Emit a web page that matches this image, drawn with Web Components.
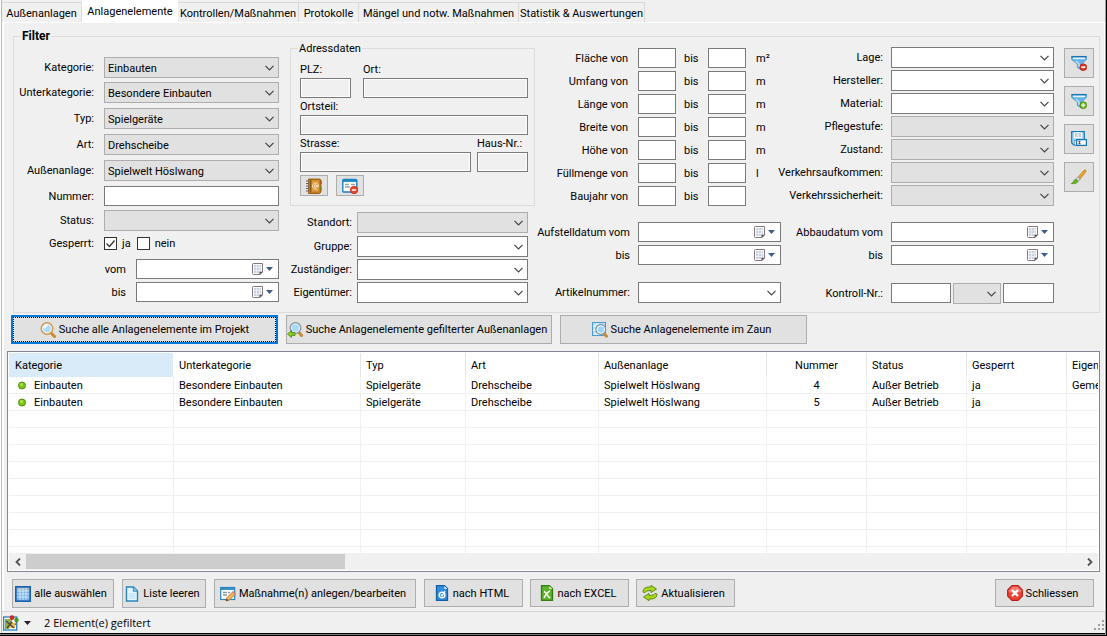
<!DOCTYPE html>
<html lang="de">
<head>
<meta charset="utf-8">
<title>Anlagenelemente</title>
<style>
  body { margin: 0; background: #f0f0f0; color: #000; font: 11px/15px Roboto, "Liberation Sans", sans-serif; }
</style>
</head>
<body>
<asset-window></asset-window>
<script>
const ICONS = {
  search: `<path d="M11 11l3.500 3.500" stroke="#c98b35" stroke-width="3" stroke-linecap="round"/><circle cx="7" cy="6.500" r="5.700" fill="#bfe3fa" stroke="#d39a45" stroke-width="1.600"/><circle cx="7" cy="6.500" r="4.300" fill="#a9d8f8" stroke="#fff"/><path d="M4.500 6.500a3 3 0 0 1 3-3" stroke="#fff" stroke-width="1.500" fill="none"/>`,
  searchBack: `<path d="M12.500 11l2 2.500" stroke="#c98b35" stroke-width="3" stroke-linecap="round"/><circle cx="8.500" cy="6" r="5.300" fill="#a9d8f8" stroke="#8b9299" stroke-width="1.400"/><circle cx="8.500" cy="6" r="4.200" fill="none" stroke="#e8f6ff"/><path d="M.5 12l4-3.500v2.200h3.500v2.700h-3.500v2.200z" fill="#8fd01e" stroke="#3d8511" stroke-width=".8"/>`,
  searchArea: `<rect x=".5" y=".5" width="13" height="13" fill="#b6dcf8" stroke="#4d9ad1"/><path d="M1 4h3M1 8h3M5 1v2M2 12h5" stroke="#fff"/><path d="M12.500 12l2 2.200" stroke="#c98b35" stroke-width="3" stroke-linecap="round"/><circle cx="8.800" cy="7.500" r="4.800" fill="#9bd2f8" stroke="#7f8991" stroke-width="1.200"/><circle cx="8.800" cy="7.500" r="3.800" fill="none" stroke="#fff"/>`,
  book: `<path d="M2.500 1h11l1.500 1v12l-1.500 1.500h-11z" fill="#c47a1c" stroke="#86500e" stroke-width=".8"/><path d="M4.500 1.500v13" stroke="#8d540f"/><rect x="6" y="2.500" width="7" height="11" fill="#d99a3c"/><path d="M0 3h3M0 5.500h3M0 8h3M0 10.500h3M0 13h3" stroke="#666"/><circle cx="9.500" cy="8" r="1.200" fill="none" stroke="#fff2d0"/><path d="M11 7v1.500q1.500 1 1.500-.7a3 3 0 1 0-1.500 2.900" fill="none" stroke="#fff2d0" stroke-width=".8"/><path d="M15 3v3" stroke="#c33"/><path d="M15 9v3" stroke="#3a9a2a"/>`,
  formDel: `<rect x=".8" y="1.500" width="14" height="12.500" rx="1" fill="#fff" stroke="#1681c4" stroke-width="1.400"/><path d="M1 3h14" stroke="#1681c4" stroke-width="1.800"/><path d="M3 6.500h4M3 9h5M9 6.500h4" stroke="#9aa5ae" stroke-width="1.500"/><circle cx="12" cy="12" r="3.700" fill="#e8472b" stroke="#b82812" stroke-width=".7"/><path d="M9.800 12h4.400" stroke="#fff" stroke-width="1.500"/>`,
  funnelDel: `<path d="M.6 1.500h14.800v3l-5 4.500v6l-4-2.500v-3.500l-5.800-4.500z" fill="#62b3ea" stroke="#3f93cc" stroke-width=".8"/><path d="M.5 1.700h15" stroke="#1d72ae" stroke-width="1.500"/><path d="M2 3.400h12" stroke="#e3f4fe" stroke-width="1.600"/><path d="M5 6l3 3v3" stroke="#c2e4fa" stroke-width="1.500"/><circle cx="12.300" cy="12.200" r="3.400" fill="#e23b24" stroke="#a81c0c" stroke-width=".7"/><path d="M10.300 12.200h4" stroke="#fff" stroke-width="1.600"/>`,
  funnelAdd: `<path d="M.6 1.500h14.800v3l-5 4.500v6l-4-2.500v-3.500l-5.800-4.500z" fill="#62b3ea" stroke="#3f93cc" stroke-width=".8"/><path d="M.5 1.700h15" stroke="#1d72ae" stroke-width="1.500"/><path d="M2 3.400h12" stroke="#e3f4fe" stroke-width="1.600"/><path d="M5 6l3 3v3" stroke="#c2e4fa" stroke-width="1.500"/><circle cx="12.300" cy="12.200" r="3.400" fill="#6eb413" stroke="#3f7f08" stroke-width=".7"/><path d="M10.300 12.200h4M12.300 10.200v4" stroke="#fff" stroke-width="1.500"/>`,
  save: `<path d="M.7.7h12.600v13.300h-10.600l-2-2z" fill="#a9d9f5" stroke="#1878b8" stroke-width="1.200"/><rect x="3" y="1.300" width="8" height="5.700" fill="#fff"/><path d="M4 3h2.500M7.500 3h2.500M4 5h2.500M7.500 5h2.500" stroke="#8b9298"/><rect x="3.200" y="9.500" width="3" height="4.500" fill="#fff" stroke="#1878b8" stroke-width=".6"/><rect x="5.600" y="8.600" width="9.800" height="5.800" fill="#fff" stroke="#1878b8" stroke-width="1.300"/><path d="M7.200 10.200h2.600M7.200 12.800h2.600M8.500 10.200v2.600" stroke="#333" stroke-width=".8"/>`,
  brush: `<path d="M15 1.200q-1-1-3 1l-5 6 2 1.800 5-6q1.500-2 1-2.800z" fill="#efa02b" stroke="#b87415" stroke-width=".6"/><path d="M7.200 7.800l2.200 2-2.200 2.500-2.300-2z" fill="#d9dde0" stroke="#777" stroke-width=".7"/><path d="M4.800 10.300l2.200 2q-1 3-6.800 2.200 2.200-1 2.300-2.200t2.300-2z" fill="#67b516" stroke="#4b8612" stroke-width=".6"/>`,
  calendar: `<path d="M4.500 2.500h9v8.500l-2.500 2.500h-6.500q-1 0-1-1v-9q0-1 1-1z" fill="#fff" stroke="#85777b"/><rect x="5" y="4" width="7" height="8" fill="#c9d1de"/><path d="M5 6.500h7M5 9.500h7M7.500 4v8M10.500 4v8" stroke="#eef2f8" stroke-width=".8"/><path d="M10.500 14v-3.200h3.300z" fill="#5a4a50"/>`,
  grid: `<rect x=".8" y=".8" width="14.400" height="14.400" fill="#74ade2" stroke="#1a5fae" stroke-width="1.600"/><rect x="2" y="2" width="12" height="2.500" fill="#a3b9bd"/><path d="M2 5h12M2 8h12M2 11h12M5 2v12M8 2v12M11 2v12" stroke="#d9ecfb" stroke-width=".9"/>`,
  page: `<path d="M2.500 1h7l4 4v10h-11z" fill="#e5f4fd" stroke="#2a86b8" stroke-width="1.400"/><path d="M9.300 1v4.200h4" fill="#9bd0ee" stroke="#2a86b8"/><path d="M4.500 8h7M4.500 10h7M4.500 12h7" stroke="#b2dcf4"/>`,
  formEdit: `<rect x=".7" y="1.500" width="14" height="12" fill="#fff" stroke="#2585bd" stroke-width="1.200"/><path d="M1 3h13.500" stroke="#2585bd" stroke-width="1.800"/><path d="M3 6.500h4M3 9h4M8 6.500h2" stroke="#8b969d" stroke-width="1.300"/><path d="M6 15l1-3.500 6-6 2.500 2.500-6 6z" fill="#f3b45c" stroke="#ae6a20" stroke-width=".8"/><path d="M12 6.500l2.500 2.500 1-1-2.500-2.500z" fill="#e97b8c"/><path d="M6 15l.7-2.300 1.600 1.600z" fill="#333"/>`,
  html: `<path d="M2.500.7h8l3 3v11.600h-11z" fill="#2f8ddb" stroke="#1260a8" stroke-width="1.300"/><path d="M10.300 1v3h3z" fill="#d5ecfd"/><circle cx="8" cy="10" r="2.900" fill="none" stroke="#fff" stroke-width="1.400"/><path d="M8 11l3-5M7 9.500l1.500 2" stroke="#fff" stroke-width="1.300"/>`,
  excel: `<path d="M2.500.7h8l3 3v11.600h-11z" fill="#5fb02d" stroke="#347c12" stroke-width="1.300"/><path d="M10.300 1v3h3z" fill="#dff2d0"/><path d="M5 6.500q2 1 3 3t3 3.500M11 6q-3 1-6 7" stroke="#fff" stroke-width="1.600" fill="none"/>`,
  refresh: `<path d="M1 7q0-5 6-5h2v-1.700l5.500 3.700-5.500 3.600v-2h-2q-3 0-4 2z" fill="#a9d51e" stroke="#55860c" stroke-width=".9"/><path d="M15 9q0 5-6 5h-2v1.700l-5.500-3.700 5.500-3.600v2h2q3 0 4-2z" fill="#a9d51e" stroke="#55860c" stroke-width=".9"/>`,
  close: `<path d="M5 .7h6l4.300 4.300v6l-4.300 4.300h-6l-4.300-4.300v-6z" fill="#ea4434" stroke="#b71f18" stroke-width="1.200"/><path d="M5.300 1.800h5.400l3.500 3.500v2q-6 1-12.400 0v-2z" fill="#f2796b"/><path d="M5 5l6 6M11 5l-6 6" stroke="#fff" stroke-width="2.400"/>`,
  map: `<rect x=".7" y="2" width="13" height="13" fill="#fff" stroke="#2682bd" stroke-width="1.300"/><path d="M2 4h5l1 5-2 5h-4z" fill="#8ab72c"/><path d="M8 7l4 1v5h-5z" fill="#e4b84b"/><path d="M3 6l8 7M4 13l5-6" stroke="#544" stroke-width="1.400"/><path d="M8.500 4l-1 4M13.500 6l-1 4" stroke="#555"/><circle cx="9" cy="2.700" r="2.400" fill="#d9281b"/><circle cx="13.500" cy="5" r="2.200" fill="#3c9f27"/>`,
  dot: `<circle cx="8" cy="7.500" r="3.500" fill="#7cc613" stroke="#4d8d0d"/><circle cx="7.500" cy="6.500" r="1.500" fill="#a9e34a"/>`
};

class UiIcon extends HTMLElement {
  connectedCallback() {
    this.attachShadow({ mode: "open" }).innerHTML =
      `<style>:host{display:block;width:16px;height:16px;flex:none}svg{display:block}</style>
       <svg width="16" height="16" viewBox="0 0 16 16" fill="none" aria-hidden="true">${ICONS[this.getAttribute("name")]}</svg>`;
  }
}

class UiButton extends HTMLElement {
  connectedCallback() {
    const icon = this.getAttribute("icon");
    const name = this.getAttribute("name") || "";
    this.attachShadow({ mode: "open" }).innerHTML = `<style>
      :host{display:block;height:28px}
      button{box-sizing:border-box;width:100%;height:100%;display:flex;align-items:center;justify-content:center;gap:3px;
        margin:0;padding:0 4px 0 0;border:1px solid #adadad;background:#e1e1e1;color:inherit;font:inherit;white-space:nowrap}
      :host([compact]) button{padding:0}
      :host([current]) button{padding:0;border:2px solid #0078d7;outline:1px dotted #000;outline-offset:-3px}
      </style>
      <button type="button"${name ? ` aria-label="${name}"` : ""}><ui-icon name="${icon}"></ui-icon><slot></slot></button>`;
  }
}

/* Labelled control: kind is "text", "select" or "date". */
class UiField extends HTMLElement {
  connectedCallback() {
    const label = this.getAttribute("label") || "";
    const value = this.getAttribute("value") || "";
    const kind = this.getAttribute("kind") || "text";
    const aria = label ? "" : ` aria-label="${this.getAttribute("name")}"`;
    let control;
    if (kind === "select") {
      control = `<select id="c"${aria}><option>${value}</option></select>
        <svg class="mark" width="9" height="6" viewBox="0 0 9 6" fill="none" aria-hidden="true"><path d="M.5.8l4 4 4-4" stroke="#444" stroke-width="1.200"/></svg>`;
    } else {
      control = `<input id="c" type="text" value="${value}"${this.hasAttribute("locked") ? " readonly" : ""}${aria}>`;
      if (kind === "date") control += `<button class="mark" type="button" aria-label="Kalender"><ui-icon name="calendar"></ui-icon><svg width="7" height="4" viewBox="0 0 7 4" aria-hidden="true"><path d="M0 0h7L3.500 4z" fill="#3e5c8a"/></svg></button>`;
    }
    this.attachShadow({ mode: "open" }).innerHTML = `<style>
      :host{display:grid;grid-template-columns:var(--label,0px) minmax(0,1fr);column-gap:var(--gap,8px);align-items:center;align-self:start}
      :host([bare]){display:block}
      :host([stacked]){display:block}
      label{text-align:right;white-space:nowrap;justify-self:end}
      :host([stacked]) label{display:block;text-align:left;justify-self:start;line-height:17px}
      .box{display:grid;align-items:center}
      input,select{grid-area:1/1;box-sizing:border-box;width:100%;min-width:0;height:20px;margin:0;padding:0 3px;border:1px solid #7a7a7a;
        border-radius:0;background:#fff;color:inherit;font:inherit;appearance:none;outline:0}
      select{height:21px;padding-top:1px}
      :host([gray]) select{background:#e1e1e1;border-color:#adadad}
      input[readonly]{background:#f0f0f0;box-shadow:inset 0 0 0 1px #fff}
      .mark{grid-area:1/1;justify-self:end;margin:0 5px 0 0;pointer-events:none}
      button.mark{display:flex;align-items:center;gap:1px;margin-right:6px;padding:0;border:0;background:none}
      </style>
      ${label ? `<label for="c">${label}</label>` : ""}<div class="box">${control}</div>`;
  }
}

class UiCheck extends HTMLElement {
  connectedCallback() {
    this.attachShadow({ mode: "open" }).innerHTML = `<style>
      :host{display:block}
      label{display:flex;align-items:center;gap:5px}
      .box{display:grid}
      input{grid-area:1/1;appearance:none;box-sizing:border-box;width:13px;height:13px;margin:0;border:1px solid #333;background:#fff}
      svg{grid-area:1/1;visibility:hidden;pointer-events:none}
      input:checked + svg{visibility:visible}
      </style>
      <label><span class="box"><input type="checkbox"${this.hasAttribute("on") ? " checked" : ""}><svg width="13" height="13" viewBox="0 0 13 13" fill="none" aria-hidden="true"><path d="M2.500 6.500l3 3 5-6" stroke="#333" stroke-width="1.300"/></svg></span><slot></slot></label>`;
  }
}

/* Range row: "<label> von [ ] bis [ ] <unit>" */
class RangeField extends HTMLElement {
  connectedCallback() {
    this.attachShadow({ mode: "open" }).innerHTML = `<style>
      :host{display:grid;grid-template-columns:85px minmax(0,1fr) 16px minmax(0,1fr) 27px;column-gap:8px;align-items:center;align-self:start}
      label{white-space:nowrap}
      .name{text-align:right;padding-right:2px}
      input{box-sizing:border-box;width:100%;height:20px;margin:0;padding:0 3px;border:1px solid #7a7a7a;font:inherit;border-radius:0}
      span{padding-left:2px}
      </style>
      <label class="name" for="a">${this.getAttribute("label")} von</label><input id="a" type="text">
      <label for="b">bis</label><input id="b" type="text"><span>${this.getAttribute("unit") || ""}</span>`;
  }
}

class UiGroup extends HTMLElement {
  connectedCallback() {
    this.attachShadow({ mode: "open" }).innerHTML = `<style>
      :host{display:block}
      fieldset{margin:0;padding:0;border:1px solid #dcdcdc;min-width:0}
      legend{margin-left:7px;padding:0 1px;line-height:var(--legend,11px);height:var(--legend,11px);font-weight:var(--weight,400);font-size:var(--size,11px)}
      </style>
      <fieldset><legend>${this.getAttribute("legend")}</legend><slot></slot></fieldset>`;
  }
}

class TabBar extends HTMLElement {
  connectedCallback() {
    const tabs = [["Außenanlagen", 80], ["Anlagenelemente", 96], ["Kontrollen/Maßnahmen", 121], ["Protokolle", 60], ["Mängel und notw. Maßnahmen", 160], ["Statistik &amp; Auswertungen", 126]];
    this.attachShadow({ mode: "open" }).innerHTML = `<style>
      :host{display:flex;align-items:flex-end;height:22px}
      button{box-sizing:border-box;height:20px;margin:0;padding:1px 0 0;border:1px solid #d9d9d9;border-width:1px 1px 0 0;background:#f0f0f0;color:inherit;font:inherit;white-space:nowrap}
      button[aria-selected=true]{height:22px;padding:0;border:0;background:#fff}
      </style>` + tabs.map(([t, w], i) => `<button type="button" role="tab" aria-selected="${i === 1}" style="width:${w}px">${t}</button>`).join("");
    this.setAttribute("role", "tablist");
  }
}

class FilterPanel extends HTMLElement {
  connectedCallback() {
    const sel = (l, v = "", g = "") => `<ui-field kind="select" label="${l}" value="${v}" ${g}></ui-field>`;
    this.attachShadow({ mode: "open" }).innerHTML = `<style>
      :host{display:block;--size:12px}
      .main{--weight:700;--legend:13px}
      .columns{--weight:400;--legend:11px;--size:11px;display:grid;grid-template-columns:270fr 255fr 238fr 281fr 30px;padding:0 5px 8px 6px}
      .a,.c,.d{display:grid;align-content:start}
      .a{--label:74px;--gap:10px;padding:14px 11px 0 0;grid-template-rows:25px repeat(4,26px) 24px 26px 23px 23px 20px}
      .late{--label:106px}
      .flags{display:grid;grid-template-columns:74px auto auto 1fr;column-gap:6px;align-items:center;align-self:start}
      .flags > span{text-align:right}
      .flags > ui-check:nth-child(2){padding-left:4px}
      .b{padding-right:10px}
      .address{display:grid;grid-template-columns:minmax(0,1fr);padding:7px 6px 9px 9px}
      .pair{display:grid}
      .p1{grid-template-columns:51px 1fr;gap:12px}
      .p2{grid-template-columns:1fr 51px;gap:6px}
      .tools{display:flex;gap:8px;padding-top:3px}
      .tools ui-button{width:28px;height:21px}
      .owner{--label:62px;--gap:5px;display:grid;grid-template-rows:24px 23px 23px 21px;padding:6px 7px 0 0}
      .c{padding:5px 2px 0 0;grid-template-rows:repeat(6,23px) 36px 23px 37px 21px;--label:85px}
      .d{padding:4px 10px 0 0;grid-template-rows:repeat(6,23px) 37px 23px 38px 21px;--label:100px}
      .control{display:grid;grid-template-columns:168fr 48fr 51fr;column-gap:2px}
      .e{display:grid;gap:8px;align-content:start;padding-top:5px}
      .e ui-button{height:30px}
      </style>
      <ui-group class="main" legend="Filter"><div class="columns">
        <div class="a">
          ${sel("Kategorie:", "Einbauten", "gray")}${sel("Unterkategorie:", "Besondere Einbauten", "gray")}${sel("Typ:", "Spielgeräte", "gray")}
          ${sel("Art:", "Drehscheibe", "gray")}${sel("Außenanlage:", "Spielwelt Höslwang", "gray")}
          <ui-field label="Nummer:"></ui-field>${sel("Status:", "", "gray")}
          <div class="flags" role="group" aria-label="Gesperrt"><span>Gesperrt:</span><ui-check on>ja</ui-check><ui-check>nein</ui-check></div>
          <ui-field class="late" kind="date" label="vom"></ui-field><ui-field class="late" kind="date" label="bis"></ui-field>
        </div>
        <div class="b">
          <ui-group legend="Adressdaten"><div class="address">
            <div class="pair p1"><ui-field stacked locked label="PLZ:"></ui-field><ui-field stacked locked label="Ort:"></ui-field></div>
            <ui-field stacked locked label="Ortsteil:"></ui-field>
            <div class="pair p2"><ui-field stacked locked label="Strasse:"></ui-field><ui-field stacked locked label="Haus-Nr.:"></ui-field></div>
            <div class="tools"><ui-button compact icon="book" name="Adressbuch"></ui-button><ui-button compact icon="formDel" name="Adresse leeren"></ui-button></div>
          </div></ui-group>
          <div class="owner">${sel("Standort:", "", "gray")}${sel("Gruppe:")}${sel("Zuständiger:")}${sel("Eigentümer:")}</div>
        </div>
        <div class="c">
          <range-field label="Fläche" unit="m²"></range-field><range-field label="Umfang" unit="m"></range-field><range-field label="Länge" unit="m"></range-field>
          <range-field label="Breite" unit="m"></range-field><range-field label="Höhe" unit="m"></range-field><range-field label="Füllmenge" unit="l"></range-field>
          <range-field label="Baujahr"></range-field>
          <ui-field kind="date" label="Aufstelldatum vom"></ui-field><ui-field kind="date" label="bis"></ui-field>${sel("Artikelnummer:")}
        </div>
        <div class="d">
          ${sel("Lage:")}${sel("Hersteller:")}${sel("Material:")}${sel("Pflegestufe:", "", "gray")}${sel("Zustand:", "", "gray")}
          ${sel("Verkehrsaufkommen:", "", "gray")}${sel("Verkehrssicherheit:", "", "gray")}
          <ui-field kind="date" label="Abbaudatum vom"></ui-field><ui-field kind="date" label="bis"></ui-field>
          <div class="control"><ui-field label="Kontroll-Nr.:"></ui-field><ui-field bare gray kind="select" name="Kontrollart"></ui-field><ui-field bare name="Kontroll-Nr. bis"></ui-field></div>
        </div>
        <div class="e"><ui-button compact icon="funnelDel" name="Filter entfernen"></ui-button><ui-button compact icon="funnelAdd" name="Filter hinzufügen"></ui-button>
          <ui-button compact icon="save" name="Filter speichern"></ui-button><ui-button compact icon="brush" name="Felder leeren"></ui-button></div>
      </div></ui-group>`;
  }
}

class ResultTable extends HTMLElement {
  connectedCallback() {
    const cols = [["Kategorie", 165], ["Unterkategorie", 187], ["Typ", 105], ["Art", 133], ["Außenanlage", 168], ["Nummer", 100], ["Status", 100], ["Gesperrt", 100], ["Eigentümer", 100]];
    const rows = [
      ["Einbauten", "Besondere Einbauten", "Spielgeräte", "Drehscheibe", "Spielwelt Höslwang", "4", "Außer Betrieb", "ja", "Gemeinde"],
      ["Einbauten", "Besondere Einbauten", "Spielgeräte", "Drehscheibe", "Spielwelt Höslwang", "5", "Außer Betrieb", "ja", ""]
    ];
    const cell = (t, i) => i ? `<td>${t}</td>` : `<td><div class="first"><ui-icon name="dot"></ui-icon><span>${t}</span></div></td>`;
    const blank = `<tr>${"<td></td>".repeat(cols.length)}</tr>`;
    this.attachShadow({ mode: "open" }).innerHTML = `<style>
      :host{display:flex;flex-direction:column;box-sizing:border-box;border:1px solid #828790;padding:1px;background:#fff;min-height:0}
      .view{flex:1 1 0;min-height:0;overflow:hidden}
      table{border-collapse:separate;border-spacing:0;table-layout:fixed;width:1158px}
      th{box-sizing:border-box;height:24px;padding:0 5px;border-right:1px solid #e5e5e5;font-weight:400;text-align:left}
      th:first-child{background:#d9ebf9;padding-left:6px;border-right-color:#fff}
      td{box-sizing:border-box;height:17px;padding:2px 5px 0;line-height:14px;border:1px solid #f0f0f0;border-width:0 1px 1px 0;white-space:nowrap}
      th:nth-child(6),td:nth-child(6){text-align:center}
      .first{display:flex;align-items:center;gap:4px;height:14px}
      .bar{flex:none;display:grid;grid-template-columns:17px 319fr 736fr 17px;height:17px;background:#f0f0f0}
      .thumb{background:#cdcdcd;margin:1px 0}
      .bar button{grid-row:1;display:grid;place-items:center;margin:0;padding:0;border:0;background:none}
      .bar button:last-child{grid-column:4}
      </style>
      <div class="view"><table><colgroup>${cols.map(c => `<col style="width:${c[1]}px">`).join("")}</colgroup>
      <thead><tr>${cols.map(c => `<th scope="col">${c[0]}</th>`).join("")}</tr></thead>
      <tbody>${rows.map(r => `<tr>${r.map(cell).join("")}</tr>`).join("")}${blank.repeat(9)}</tbody></table></div>
      <div class="bar"><button type="button" aria-label="nach links"><svg width="6" height="8" viewBox="0 0 6 8" fill="none"><path d="M5 .5L1.500 4 5 7.500" stroke="#505050" stroke-width="1.800"/></svg></button>
      <div class="thumb"></div>
      <button type="button" aria-label="nach rechts"><svg width="6" height="8" viewBox="0 0 6 8" fill="none"><path d="M1 .5L4.500 4 1 7.500" stroke="#505050" stroke-width="1.800"/></svg></button></div>`;
  }
}

class StatusLine extends HTMLElement {
  connectedCallback() {
    this.attachShadow({ mode: "open" }).innerHTML = `<style>
      :host{display:flex;align-items:center;height:21px;padding-left:1px;border-top:1px solid #d7d7d7;font:11px/16px "Open Sans","Noto Sans",sans-serif}
      button{display:flex;align-items:center;gap:5px;margin:0;padding:0;border:0;background:none}
      output{flex:1;margin-left:13px}
      .grip{align-self:flex-end;margin-bottom:2px}
      </style>
      <button type="button" aria-label="Karte"><ui-icon name="map"></ui-icon><svg width="7" height="4" viewBox="0 0 7 4"><path d="M0 0h7L3.500 4z" fill="#222"/></svg></button>
      <output>2 Element(e) gefiltert</output>
      <svg class="grip" width="11" height="11" viewBox="0 0 11 11" fill="#a0a0a0" aria-hidden="true"><path d="M8 0h2v2h-2zM4 4h2v2h-2zM8 4h2v2h-2zM0 8h2v2h-2zM4 8h2v2h-2zM8 8h2v2h-2z"/></svg>`;
  }
}

class AssetWindow extends HTMLElement {
  connectedCallback() {
    this.attachShadow({ mode: "open" }).innerHTML = `<style>
      :host{display:flex;flex-direction:column;box-sizing:border-box;min-height:100vh;padding:0 2px 3px 2px;background:#f0f0f0;
        box-shadow:inset -1px 0 #000,inset 0 -1px #000,inset -2px 0 #a0a0a0,inset 0 -2px #777,inset 0 -3px #000,inset 1px 0 #fff,inset 2px 0 #b9b9b9}
      main{flex:1;display:flex;flex-direction:column;border:solid #fff;border-width:1px 1px 0 2px;padding:7px 4px 3px 3px}
      filter-panel{margin:0 0 0 6px}
      .search{display:grid;grid-template-columns:267px 266px 247px;gap:8px;padding:2px 4px 7px}
      .search ui-button,.tall{height:29px}
      result-table{flex:1}
      .actions{display:flex;align-items:flex-start;gap:8px;padding:7px 6px 0 5px}
      .actions ui-button{width:99px}
      .actions .w1{width:102px}.actions .w2{width:84px}.actions .w3{width:202px}
      .exports{display:flex;gap:7px}
      .actions .end{margin-left:auto}
      </style>
      <tab-bar></tab-bar>
      <main>
        <filter-panel></filter-panel>
        <div class="search"><ui-button current icon="search">Suche alle Anlagenelemente im Projekt</ui-button>
          <ui-button icon="searchBack">Suche Anlagenelemente gefilterter Außenanlagen</ui-button>
          <ui-button icon="searchArea">Suche Anlagenelemente im Zaun</ui-button></div>
        <result-table></result-table>
        <div class="actions"><ui-button class="tall w1" icon="grid">alle auswählen</ui-button><ui-button class="tall w2" icon="page">Liste leeren</ui-button>
          <ui-button class="tall w3" icon="formEdit">Maßnahme(n) anlegen/bearbeiten</ui-button>
          <div class="exports"><ui-button icon="html">nach HTML</ui-button><ui-button icon="excel">nach EXCEL</ui-button><ui-button icon="refresh">Aktualisieren</ui-button></div>
          <ui-button class="end" icon="close">Schliessen</ui-button></div>
      </main>
      <status-line></status-line>`;
  }
}

for (const [tag, cls] of Object.entries({
  "ui-icon": UiIcon, "ui-button": UiButton, "ui-field": UiField, "ui-check": UiCheck, "range-field": RangeField, "ui-group": UiGroup,
  "tab-bar": TabBar, "filter-panel": FilterPanel, "result-table": ResultTable, "status-line": StatusLine, "asset-window": AssetWindow
})) customElements.define(tag, cls);
</script>
</body>
</html>
